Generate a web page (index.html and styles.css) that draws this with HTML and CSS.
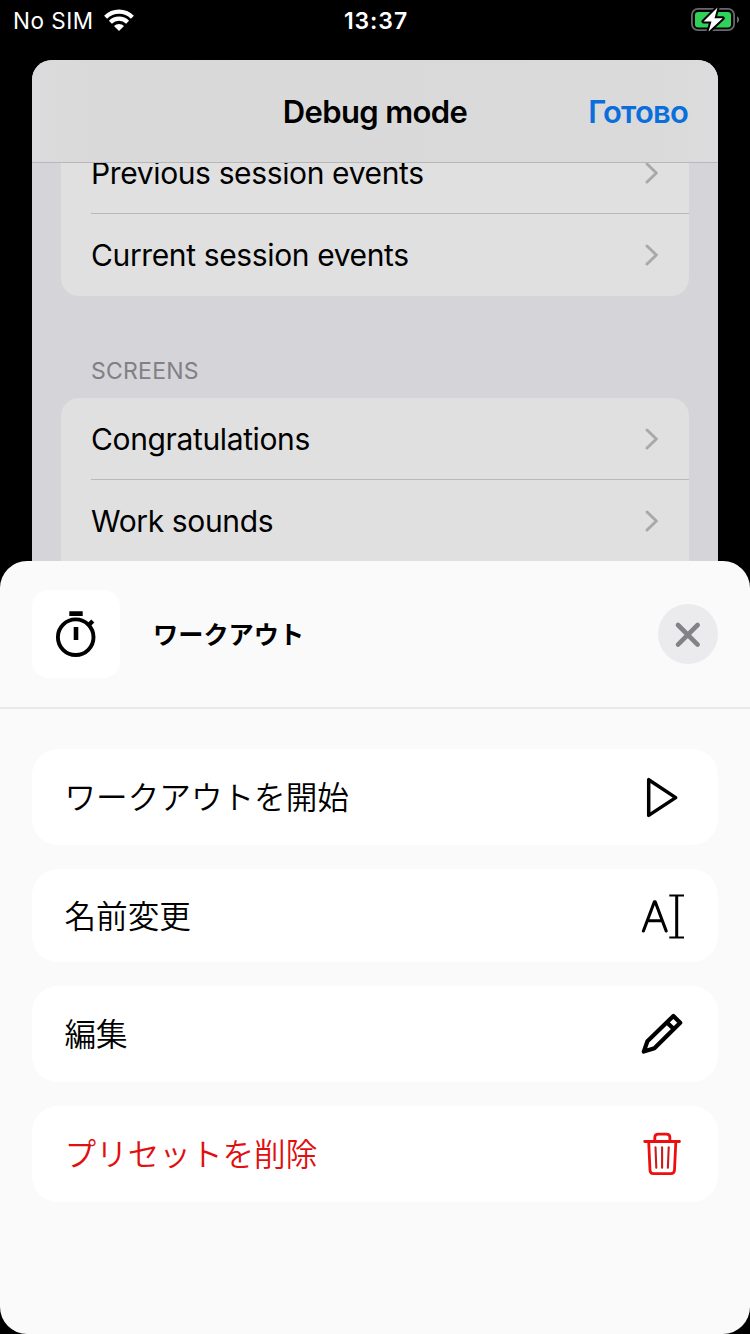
FILE: index.html
```html
<!DOCTYPE html>
<html lang="ja">
<head>
<meta charset="utf-8">
<title>ワークアウト</title>
<link rel="stylesheet" href="styles.css">
</head>
<body>
<div class="status">
  <div class="carrier"><span>No SIM</span>
    <svg width="30" height="22" viewBox="0 0 30 22" fill="none" stroke="#fff" stroke-width="4.2"><path d="M1.6 8.2a19 19 0 0 1 26.8 0M6.4 13.2a12.2 12.2 0 0 1 17.2 0"/><path d="M15 22l-5-5a7.1 7.1 0 0 1 10 0z" fill="#fff" stroke="none"/></svg>
  </div>
  <div class="clock">13:37</div>
  <svg class="battery" width="50" height="28" viewBox="0 0 50 28"><rect x="2.9" y="4.9" width="42.2" height="21.2" rx="6" fill="none" stroke="#696969" stroke-width="1.8"/><rect x="6" y="8" width="36" height="15.4" rx="3.2" fill="#30d158"/><path d="M48 12.2v6.8a3.8 3.8 0 0 0 0-6.8z" fill="#696969"/><path d="M28.5 3.6L14.5 17.4h8L19.5 27.6l14.2-13.4h-8.2z" fill="#fff" stroke="#000" stroke-width="4" stroke-linejoin="round" paint-order="stroke"/></svg>
</div>
<div class="card">
  <div class="navbar"><span class="title">Debug mode</span><span class="done">Готово</span></div>
  <div class="list">
    <div class="group first">
      <div class="row"><span>Previous session events</span><svg class="chev" viewBox="0 0 16 24"><path d="M3 3l9.4 9L3 21"/></svg></div>
      <div class="row"><span>Current session events</span><svg class="chev" viewBox="0 0 16 24"><path d="M3 3l9.4 9L3 21"/></svg></div>
    </div>
    <div class="section">SCREENS</div>
    <div class="group last">
      <div class="row"><span>Congratulations</span><svg class="chev" viewBox="0 0 16 24"><path d="M3 3l9.4 9L3 21"/></svg></div>
      <div class="row"><span>Work sounds</span><svg class="chev" viewBox="0 0 16 24"><path d="M3 3l9.4 9L3 21"/></svg></div>
    </div>
  </div>
</div>
<div class="sheet">
  <div class="head">
    <div class="tile"><svg width="88" height="88" viewBox="0 0 88 88" fill="none" stroke="#000"><circle cx="43.7" cy="47.2" r="17.8" stroke-width="3.9"/><path d="M37.3 23.6h13.4M44 37v13" stroke-width="4.6"/><path d="M55.8 35.8l5-4.8" stroke-width="4.4"/></svg></div>
    <span class="name">ワークアウト</span>
    <div class="close"><svg width="60" height="60" viewBox="0 0 60 60"><path d="M20 21l19.6 19.6M39.6 21L20 40.6" stroke="#838387" stroke-width="4.6" stroke-linecap="round"/></svg></div>
  </div>
  <div class="actions">
    <div class="action"><span>ワークアウトを開始</span><svg class="icon" viewBox="0 0 60 60"><path d="M18.7 11.7v35.7L45.7 29.6z" stroke-width="3.5"/></svg></div>
    <div class="action short"><span>名前変更</span><svg class="icon" viewBox="0 0 60 60"><path d="M13.4 44L24.4 14.8h.8L36.2 44M17.2 33.8h15.2" stroke-width="3.1" stroke-linecap="round"/><path d="M39.3 8.5H54M39.3 50.5H54" stroke-width="2.2"/><path d="M46.7 8.5v42" stroke-width="3"/></svg></div>
    <div class="action"><span>編集</span><svg class="icon" viewBox="0 0 60 60"><path d="M13.8 46.6L17.4 36.2 43.4 11l6.8 6.8L24.4 43.3zM36.9 17.4l6.9 6.7" stroke-width="4.2"/></svg></div>
    <div class="action danger"><span>プリセットを削除</span><svg class="icon" viewBox="0 0 60 60"><path d="M14.7 16.5h34.8M24.8 16v-3.4q0-3.5 3.5-3.5h8.1q3.5 0 3.5 3.5V16M18.7 17l1.3 28.2q.2 3.5 3.7 3.5h17.1q3.5 0 3.7-3.5L45.8 17" stroke-width="2.8" stroke-linecap="round"/><path d="M25.5 22.3l.8 20.5M32.1 22.3v20.5M38.7 22.3l-.8 20.5" stroke="#c91c1c" stroke-width="2.1" stroke-linecap="round"/></svg></div>
  </div>
</div>
</body>
</html>
```
FILE: styles.css
```css
* { box-sizing: border-box; }
body { margin: 0; width: 750px; height: 1334px; overflow: hidden; background: #000; display: flex; flex-direction: column; font-family: Inter, "Noto Sans CJK JP", sans-serif; color: #000; }
svg { display: block; flex: none; }
span { white-space: nowrap; }
.status { height: 60px; padding: 1px 11px 19px 13px; display: grid; grid-template-columns: 1fr auto 1fr; align-items: center; color: #fff; font-size: 22.5px; line-height: 40px; }
.carrier { display: flex; align-items: center; gap: 10px; letter-spacing: 0.5px; }
.carrier svg { margin-top: -2px; }
.clock { font-weight: 600; font-size: 23px; letter-spacing: 0.9px; }
.battery { justify-self: end; margin-top: -6px; }
.card { height: 501px; margin: 0 32px; background: #d5d4d9; border-radius: 20px 20px 0 0; overflow: hidden; flex: none; }
.navbar { height: 103px; background: linear-gradient(90deg, #dbdbdd, #d9d9d9 12%, #dadada 90%, #dcdcde); border-bottom: 1px solid #b8b8ba; display: grid; grid-template-columns: 1fr auto 1fr; align-items: center; padding: 0 30px; font-weight: 600; font-size: 31px; letter-spacing: -0.6px; position: relative; }
.title { grid-column: 2; }
.done { justify-self: end; color: #0a6edb; letter-spacing: -0.8px; }
.list { padding: 0 29px; }
.group { background: #e0e0e0; border-radius: 18px; overflow: hidden; }
.first { margin-top: -31px; }
.last { padding-bottom: 30px; }
.row { height: 82px; margin-left: 30px; padding-right: 29px; display: flex; align-items: center; justify-content: space-between; font-size: 30px; letter-spacing: -0.37px; border-bottom: 1px solid #b9b9bb; }
.row:last-child { border-bottom: 0; }
.chev { width: 16px; height: 24px; fill: none; stroke: #a9a9ab; stroke-width: 3; stroke-linecap: round; stroke-linejoin: round; }
.section { height: 102px; padding: 59px 0 0 30px; font-size: 23px; line-height: 32px; letter-spacing: 0.25px; color: #808085; }
.sheet { height: 773px; background: #fafafa; border-radius: 27px; flex: none; }
.head { height: 148px; border-bottom: 2px solid #e9e9ea; display: flex; align-items: center; padding: 0 32px; }
.tile { width: 88px; height: 88px; background: #fff; border-radius: 16px; }
.name { font-family: "Noto Sans CJK JP", sans-serif; font-weight: 700; font-size: 25.2px; margin-left: 33px; padding-bottom: 3px; }
.close { margin-left: auto; width: 60px; height: 60px; border-radius: 50%; background: #ebebed; }
.actions { padding: 40px 32px; display: flex; flex-direction: column; gap: 24px; }
.action { height: 96px; border-radius: 26px; background: #fff; padding: 0 28px 0 32.5px; display: flex; align-items: center; justify-content: space-between; font: 350 31.6px/48px "Noto Sans CJK JP", sans-serif; }
.action span { padding-bottom: 4px; }
.short { height: 93px; }
.danger { color: #e01010; }
.icon { width: 60px; height: 60px; margin-top: 2px; fill: none; stroke: #000; stroke-linejoin: round; }
.danger .icon { stroke: #ec0f0f; }
```
